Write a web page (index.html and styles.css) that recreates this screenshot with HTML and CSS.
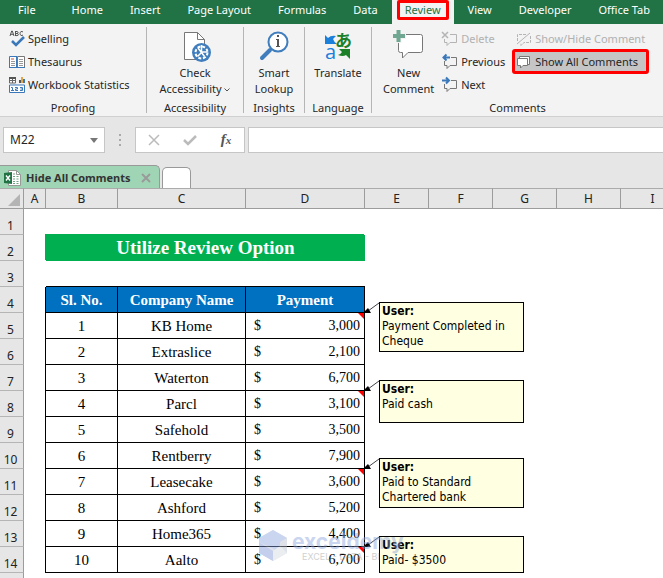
FILE: index.html
```html
<!DOCTYPE html>
<html lang="en">
<head>
    <meta charset="UTF-8">
    <meta name="viewport" content="width=device-width, initial-scale=1.0">
    <title>Hide All Comments</title>
    <link rel="stylesheet" href="styles.css">
</head>
<body>
    <!-- Ribbon tabs -->
    <nav class="tabs">
        <button class="tab file">File</button>
        <button class="tab">Home</button>
        <button class="tab">Insert</button>
        <button class="tab">Page Layout</button>
        <button class="tab">Formulas</button>
        <button class="tab">Data</button>
        <button class="tab active">Review</button>
        <button class="tab">View</button>
        <button class="tab">Developer</button>
        <button class="tab">Office Tab</button>
    </nav>

    <!-- Ribbon -->
    <div class="ribbon">
        <section class="group proofing">
            <div class="group-body">
                <div class="stack">
                    <button class="cmd">
                        <svg width="16" height="18" viewBox="0 0 16 18"><path d="M1 6l1.700-5h.6L5 6M1.700 4.300h2.600M6.500 1v5M6.500 1.500h1.600q1 .2 1 1t-1 1h-1.600M8 3.500q1.400.2 1.400 1.100t-1.300 1H6.500M14 2q-1-.8-2-.4-1 .5-1 1.900t1 1.900q1 .4 2-.4" fill="none" stroke="#555"/><path d="M3 11l4 4 8-8" fill="none" stroke="#3b78b9" stroke-width="2.600"/></svg>
                        Spelling
                    </button>
                    <button class="cmd">
                        <svg width="16" height="14" viewBox="0 0 16 14"><path d="M.5 1.500h7v11h-7z" fill="#fff" stroke="#3b78b9"/><path d="M8.500 1.500h7v11h-7z" fill="#fff" stroke="#777"/><path d="M0 12.500h16M7.500 1v12" stroke="#3b78b9"/><path d="M2 4h3" stroke="#d04a3a"/><path d="M2 6.500h4M2 8.500h4M2 10.500h4M10 4.500h4M10 6.500h4M10 8.500h4M10 10.500h4" stroke="#999"/></svg>
                        Thesaurus
                    </button>
                    <button class="cmd">
                        <svg width="16" height="16" viewBox="0 0 16 16"><path d="M.5 1h6v5h-6zM.5 3.500h6M3.500 2v4" fill="#fff" stroke="#666"/><path d="M0 1h7" stroke="#555" stroke-width="2"/><path d="M10 3h2v3h-2z" fill="#555"/><path d="M12 0h2v6h-2z" fill="#e0a64a"/><path d="M14 2h2v4h-2z" fill="#3b78b9"/><path d="M.5 8h15v7.500H.5z" fill="#fff" stroke="#3b78b9"/><path d="M2 10.500h1.500v3M2 13.500h3M6 10.500h2.500v1.500H6.500v1.500H9M11 10.500h2.500v3H11M11.500 12h2" fill="none" stroke="#3b78b9"/></svg>
                        Workbook Statistics
                    </button>
                </div>
            </div>
            <div class="group-label">Proofing</div>
        </section>

        <section class="group accessibility">
            <div class="group-body">
                <button class="big">
                    <svg width="32" height="32" viewBox="0 0 32 32"><path d="M5.500 2.500h13l7 7v20h-20z" fill="#fff" stroke="#777"/><path d="M18.500 2.500v7h7" fill="none" stroke="#777"/><circle cx="22.500" cy="22.500" r="9.500" fill="#3f7dbd"/><circle cx="22.500" cy="22.500" r="6" fill="none" stroke="#fff" stroke-width="2" stroke-dasharray="3 1.700"/><path d="M22.500 15v7h6M19 18l3.500 4.500-4 4M22.500 22.500l3 4" fill="none" stroke="#fff" stroke-width="1.500"/></svg>
                    <span>Check<br>Accessibility <svg class="chevron" width="6" height="4" viewBox="0 0 6 4"><path d="M.5.5L3 3 5.500.5" fill="none" stroke="#555"/></svg></span>
                </button>
            </div>
            <div class="group-label">Accessibility</div>
        </section>

        <section class="group insights">
            <div class="group-body">
                <button class="big">
                    <svg width="32" height="32" viewBox="0 0 32 32"><path d="M12 20l-8 8" stroke="#3f7dbd" stroke-width="4" stroke-linecap="round"/><circle cx="20" cy="12" r="9.500" fill="#fff" stroke="#3f7dbd" stroke-width="2"/><path d="M19 5h2v2h-2zM18 9h3v7h1v1h-4v-1h1v-6h-1z" fill="#555"/></svg>
                    <span>Smart<br>Lookup</span>
                </button>
            </div>
            <div class="group-label">Insights</div>
        </section>

        <section class="group language">
            <div class="group-body">
                <button class="big">
                    <svg width="32" height="32" viewBox="0 0 32 32"><path d="M3 5l3 3q3-3 8-2l-3 3q1 3 4 5H3z" fill="#1b7fdc"/><path d="M28 29V19H17l3 3q-2 3-4 3 5 2 8 0z" fill="#1b8027"/><text x="3" y="29" class="latin">a</text><text x="13" y="17" class="kana">あ</text></svg>
                    <span>Translate</span>
                </button>
            </div>
            <div class="group-label">Language</div>
        </section>

        <section class="group comments">
            <div class="group-body">
                <button class="big">
                    <svg width="32" height="32" viewBox="0 0 32 32"><path d="M5.500 4.500h22q2 0 2 2v14q0 2-2 2H15l-5.500 5.500v-5.500h-2q-2 0-2-2z" fill="#fff" stroke="#777"/><path d="M5.500 0v13M0 6h13" stroke="#f3f3f3" stroke-width="6"/><path d="M5.500 0v12M0 6h12" stroke="#6fa792" stroke-width="4"/></svg>
                    <span>New<br>Comment</span>
                </button>
                <div class="stack nav">
                    <button class="cmd" disabled>
                        <svg width="16" height="16" viewBox="0 0 16 16"><path d="M8 3.500h6.500v8H8l-3 3v-3H2.500V8" fill="none" stroke="#b4b4b4"/><path d="M0 1l6 6M6 1L0 7" stroke="#b4b4b4" stroke-width="1.500"/></svg>
                        Delete
                    </button>
                    <button class="cmd">
                        <svg width="16" height="16" viewBox="0 0 16 16"><path d="M9 3.500h5.500v8H8l-3 3v-3H2.500V7" fill="none" stroke="#777"/><path d="M8 3.500H2M4.500.5l-3 3 3 3" fill="none" stroke="#3b78b9" stroke-width="2"/></svg>
                        Previous
                    </button>
                    <button class="cmd">
                        <svg width="16" height="16" viewBox="0 0 16 16"><path d="M9 3.500h5.500v8H8l-3 3v-3H2.500V7" fill="none" stroke="#777"/><path d="M0 3.500h6.500M4 .5l3 3-3 3" fill="none" stroke="#3b78b9" stroke-width="2"/></svg>
                        Next
                    </button>
                </div>
                <div class="stack">
                    <button class="cmd" disabled>
                        <svg width="16" height="16" viewBox="0 0 16 16"><path d="M1.500 10V3.500H11M14.500 5v6.500H8l-3 3v-2" fill="none" stroke="#b4b4b4" stroke-dasharray="3 1"/><path d="M1 13L14 2" stroke="#b4b4b4"/></svg>
                        Show/Hide Comment
                    </button>
                    <button class="cmd pressed">
                        <svg width="16" height="16" viewBox="0 0 16 16"><path d="M3.500 4.500v-2h10v8h-2" fill="#fff" stroke="#777"/><path d="M1.500 4.500h10v7H7l-2.500 2.500v-2.500h-3z" fill="#fff" stroke="#777"/></svg>
                        Show All Comments
                    </button>
                </div>
            </div>
            <div class="group-label">Comments</div>
        </section>
    </div>

    <!-- Name box and formula bar -->
    <div class="formula-row">
        <div class="name-box">
            <input type="text" value="M22" aria-label="Name box">
            <button aria-label="Open name list"><svg width="8" height="5" viewBox="0 0 8 5"><path d="M0 0h8L4 5z" fill="#777"/></svg></button>
        </div>
        <svg class="grip" width="2" height="12" viewBox="0 0 2 12"><path d="M0 0h2v2H0zM0 5h2v2H0zM0 10h2v2H0z" fill="#aaa"/></svg>
        <div class="formula-tools">
            <button aria-label="Cancel"><svg width="12" height="12" viewBox="0 0 12 12"><path d="M1 1l10 10M11 1L1 11" stroke="#bbb" stroke-width="1.500"/></svg></button>
            <button aria-label="Enter"><svg width="14" height="12" viewBox="0 0 14 12"><path d="M1 6l4 4 8-8" fill="none" stroke="#bbb" stroke-width="2.500"/></svg></button>
            <button class="fx" aria-label="Insert function">f<small>x</small></button>
        </div>
        <input class="formula" type="text" aria-label="Formula bar">
    </div>

    <!-- Open workbooks -->
    <div class="books">
        <button class="book">
            <svg width="17" height="16" viewBox="0 0 17 16"><path d="M4.500.5h8l4 4v11h-12z" fill="#fff" stroke="#999"/><path d="M12.500.5v4h4" fill="none" stroke="#999"/><path d="M9 6.500h2M12.500 6.500h2M9 9h2M12.500 9h2M9 11.500h2M12.500 11.500h2M9 4h2M9 13.500h2M12.500 13.500h2" stroke="#6aa583"/><path d="M0 3l8-1v12l-8-1z" fill="#217346"/><path d="M2 5.500l4 5M6 5.500l-4 5" stroke="#fff" stroke-width="1.400"/></svg>
            Hide All Comments
            <svg width="10" height="10" viewBox="0 0 10 10"><path d="M1 1l8 8M9 1L1 9" stroke="#9a9a9a" stroke-width="2"/></svg>
        </button>
        <button class="book new" aria-label="New workbook"></button>
    </div>

    <!-- Worksheet -->
    <main class="sheet">
        <table>
            <colgroup>
                <col class="col-num"><col class="col-a"><col class="col-b"><col class="col-c"><col class="col-d">
                <col class="col-std"><col class="col-std"><col class="col-std"><col class="col-std"><col>
            </colgroup>
            <thead>
                <tr>
                    <th class="corner"><svg width="12" height="12" viewBox="0 0 12 12"><path d="M12 0v12H0z" fill="#b4b4b4"/></svg></th>
                    <th>A</th><th>B</th><th>C</th><th>D</th><th>E</th><th>F</th><th>G</th><th>H</th><th>I</th>
                </tr>
            </thead>
            <tbody>
                <tr><th>1</th></tr>
                <tr><th>2</th><td></td><td class="title" colspan="3">Utilize Review Option</td></tr>
                <tr class="above"><th>3</th><td></td><td></td><td></td><td></td></tr>
                <tr class="head"><th>4</th><td></td><td>Sl. No.</td><td>Company Name</td><td>Payment</td></tr>
                <tr class="data"><th>5</th><td></td><td>1</td><td>KB Home</td><td class="noted"><div class="money"><span>$</span><span>3,000</span></div>
                    <svg class="arrow" width="18" height="14" viewBox="0 0 18 14"><path d="M16 1L5 9" stroke="#444"/><path d="M0 11l5-5 3 5z"/></svg>
                    <div class="note"><b>User:</b><br>Payment Completed in Cheque</div></td></tr>
                <tr class="data"><th>6</th><td></td><td>2</td><td>Extraslice</td><td><div class="money"><span>$</span><span>2,100</span></div></td></tr>
                <tr class="data"><th>7</th><td></td><td>3</td><td>Waterton</td><td><div class="money"><span>$</span><span>6,700</span></div></td></tr>
                <tr class="data"><th>8</th><td></td><td>4</td><td>Parcl</td><td class="noted"><div class="money"><span>$</span><span>3,100</span></div>
                    <svg class="arrow" width="18" height="14" viewBox="0 0 18 14"><path d="M16 1L5 9" stroke="#444"/><path d="M0 11l5-5 3 5z"/></svg>
                    <div class="note medium"><b>User:</b><br>Paid cash</div></td></tr>
                <tr class="data"><th>9</th><td></td><td>5</td><td>Safehold</td><td><div class="money"><span>$</span><span>3,500</span></div></td></tr>
                <tr class="data"><th>10</th><td></td><td>6</td><td>Rentberry</td><td><div class="money"><span>$</span><span>7,900</span></div></td></tr>
                <tr class="data"><th>11</th><td></td><td>7</td><td>Leasecake</td><td class="noted"><div class="money"><span>$</span><span>3,600</span></div>
                    <svg class="arrow" width="18" height="14" viewBox="0 0 18 14"><path d="M16 1L5 9" stroke="#444"/><path d="M0 11l5-5 3 5z"/></svg>
                    <div class="note"><b>User:</b><br>Paid to Standard Chartered bank</div></td></tr>
                <tr class="data"><th>12</th><td></td><td>8</td><td>Ashford</td><td><div class="money"><span>$</span><span>5,200</span></div></td></tr>
                <tr class="data"><th>13</th><td></td><td>9</td><td>Home365</td><td><div class="money"><span>$</span><span>4,400</span></div></td></tr>
                <tr class="data"><th>14</th><td></td><td>10</td><td>Aalto</td><td class="noted"><div class="money"><span>$</span><span>6,700</span></div>
                    <svg class="arrow" width="18" height="14" viewBox="0 0 18 14"><path d="M16 1L5 9" stroke="#444"/><path d="M0 11l5-5 3 5z"/></svg>
                    <div class="note short"><b>User:</b><br>Paid- $3500</div></td></tr>
                <tr><th></th></tr>
            </tbody>
        </table>

        <div class="watermark">
            <svg width="28" height="32" viewBox="0 0 28 32"><path d="M14 0l14 8v15l-14 8-14-8V8z" fill="#b9c2cf"/><path d="M14 0l14 8-7 4v10L0 12V8z" fill="#8ba4e0"/><path d="M0 12l14 9v10L0 23z" fill="#7d95d8"/><path d="M14 21l7-5 7 7-14 8z" fill="#d5dbe2"/></svg>
            <div>
                <strong>exceldemy</strong>
                <span>EXCEL - DATA - BI</span>
            </div>
        </div>
    </main>
</body>
</html>
```

FILE: styles.css
```css
:root {
    --green: #217346;
    --ribbon: #f3f3f3;
    --chrome: #e6e6e6;
    --line: #9c9c9c;
    --red: #ff0000;
    --note: #ffffe1;
}

* {
    margin: 0;
    padding: 0;
    box-sizing: border-box;
}

body {
    background: var(--chrome);
    color: #262626;
    font-family: 'Noto Sans', sans-serif;
    font-size: 11px;
    line-height: 16px;
    height: 100vh;
    display: flex;
    flex-direction: column;
    overflow: hidden;
}

button, input {
    font: inherit;
    color: inherit;
    border: none;
    background: none;
}

svg {
    flex: none;
    overflow: visible;
}

/* Tabs */
.tabs {
    display: flex;
    gap: 1px;
    height: 24px;
    padding-left: 5px;
    background: var(--green);
}

.tab {
    flex: none;
    padding: 0 13px 5px;
    color: #fff;
    white-space: nowrap;
}

.tab.file {
    padding-right: 22px;
}

.tab.active {
    background: var(--ribbon);
    color: var(--green);
    position: relative;
}

.tab.active::after {
    content: '';
    position: absolute;
    inset: 0 5px 4px;
    border: 3px solid var(--red);
    border-radius: 2px;
}

/* Ribbon */
.ribbon {
    display: flex;
    height: 93px;
    padding: 3px 0;
    background: var(--ribbon);
    border-bottom: 1px solid #d0d0d0;
}

.group {
    flex: none;
    display: flex;
    flex-direction: column;
    border-right: 1px solid #b5b5b5;
}

.group-body {
    flex: 1;
    display: flex;
    justify-content: center;
}

.group-label {
    margin-bottom: -3px;
    text-align: center;
}

.proofing { width: 147px; }
.accessibility { width: 97px; }
.insights { width: 61px; }
.language { width: 67px; }

.comments {
    flex: 1;
    border-right: none;
}

.proofing .group-body,
.comments .group-body {
    justify-content: flex-start;
    padding-left: 9px;
}

.stack {
    display: flex;
    flex-direction: column;
    align-items: flex-start;
}

.nav {
    width: 80px;
    padding-left: 6px;
}

.cmd {
    display: flex;
    align-items: center;
    gap: 3px;
    height: 23px;
    white-space: nowrap;
}

.cmd:disabled {
    color: #b1b1b1;
}

.cmd.pressed {
    height: 21px;
    margin: 1px 0 1px -2px;
    padding: 0 9px 0 2px;
    background: #c5c5c5;
    outline: 3px solid var(--red);
    outline-offset: -1px;
    border-radius: 1px;
}

.big {
    display: flex;
    flex-direction: column;
    align-items: center;
    gap: 3px;
    padding: 3px 2px 0;
    white-space: nowrap;
}

.chevron {
    vertical-align: middle;
}

.latin {
    font: 20px 'Open Sans', sans-serif;
    fill: #1b7fdc;
}

.kana {
    font: bold 17px 'Noto Sans CJK JP', sans-serif;
    fill: #1b8027;
}

/* Formula bar */
.formula-row {
    display: flex;
    align-items: center;
    padding: 10px 0 12px 3px;
}

.name-box,
.formula-tools,
.formula {
    height: 26px;
    background: #fff;
    border: 1px solid #c6c6c6;
}

.name-box {
    display: flex;
    width: 102px;
    padding: 0 6px;
    font-size: 12px;
}

.name-box input {
    flex: 1;
    min-width: 0;
}

.name-box button {
    display: flex;
    align-items: center;
}

.grip {
    margin: 0 14px;
}

.formula-tools {
    display: flex;
    width: 110px;
    margin-right: 3px;
}

.formula-tools button {
    flex: 1;
    display: flex;
    align-items: center;
    justify-content: center;
}

.formula-tools .fx {
    align-items: baseline;
    padding-top: 3px;
    font: italic bold 15px 'Liberation Serif', serif;
    color: #555;
}

.fx small {
    font-size: 11px;
}

.formula {
    flex: 1;
    min-width: 0;
    border-right: none;
}

/* Workbook tabs */
.books {
    display: flex;
    align-items: flex-end;
    gap: 2px;
}

.book {
    display: flex;
    align-items: center;
    gap: 5px;
    width: 160px;
    height: 23px;
    padding: 2px 8px 0 4px;
    border: 1px solid #999;
    border-width: 1px 1px 0 0;
    border-radius: 0 5px 0 0;
    background: #9fd5b5;
    color: #333;
    font-weight: bold;
    white-space: nowrap;
}

.book svg:last-child {
    margin-left: auto;
}

.book.new {
    width: 29px;
    height: 21px;
    border-left-width: 1px;
    border-radius: 5px 5px 0 0;
    background: #fff;
}

/* Worksheet */
.sheet {
    flex: 1;
    min-height: 0;
    overflow: hidden;
    position: relative;
    background: #fff;
}

table {
    width: 100%;
    min-width: 685px;
    table-layout: fixed;
    border-collapse: separate;
    border-spacing: 0;
}

.col-num { width: 24px; }
.col-a { width: 22px; }
.col-b { width: 72px; }
.col-c { width: 128px; }
.col-d { width: 119px; }
.col-std { width: 64px; }

th {
    background: var(--chrome);
    border-right: 1px solid var(--line);
    color: #222;
    font-size: 12px;
    font-weight: normal;
}

thead th {
    height: 21px;
    border-top: 1px solid #ababab;
    border-bottom: 1px solid var(--line);
}

thead th.corner {
    padding: 3px 3px 0 0;
    line-height: 0;
    text-align: right;
}

tbody th {
    height: 26px;
    padding-right: 2px;
    border-bottom: 1px solid #b5b5b5;
    vertical-align: bottom;
}

td {
    font: 15px/18px 'Liberation Serif', serif;
    color: #000;
    text-align: center;
}

.title {
    background: #00b050;
    box-shadow: -1px -1px 0 #00b050;
    color: #fff;
    font-size: 19px;
    font-weight: bold;
    line-height: 24px;
}

.above td:nth-child(n+3) {
    border-bottom: 1px solid #000;
}

.head td,
.data td {
    border-right: 1px solid #000;
}

.head td:nth-child(n+3),
.data td:nth-child(n+3) {
    border-bottom: 1px solid #000;
}

.head td:nth-child(n+3) {
    background: #0070c0;
    color: #fff;
    font-weight: bold;
}

.money {
    display: flex;
    justify-content: space-between;
    padding: 0 4px 0 8px;
    font-size: 14px;
}

/* Cell notes */
.noted {
    position: relative;
}

.noted::before {
    content: '';
    position: absolute;
    top: 0;
    right: 0;
    border-top: 6px solid var(--red);
    border-left: 6px solid transparent;
}

.arrow {
    position: absolute;
    top: -11px;
    left: 117px;
}

.note {
    position: absolute;
    top: -11px;
    left: 133px;
    width: 145px;
    height: 50px;
    padding: 1px 2px 0;
    border: 1px solid #000;
    background: var(--note);
    font: 12px/15px 'DejaVu Sans Condensed', 'DejaVu Sans', sans-serif;
    text-align: left;
}

.note.medium { height: 43px; }
.note.short { height: 37px; }

/* Watermark */
.watermark {
    position: absolute;
    top: 342px;
    left: 259px;
    display: flex;
    gap: 5px;
    opacity: 0.45;
    color: #8ba4e0;
    font-family: Inter, sans-serif;
}

.watermark strong,
.watermark span {
    display: block;
}

.watermark strong {
    font-size: 21px;
    line-height: 24px;
}

.watermark span {
    padding-left: 10px;
    color: #999;
    font-size: 9px;
    line-height: 6px;
}
```
